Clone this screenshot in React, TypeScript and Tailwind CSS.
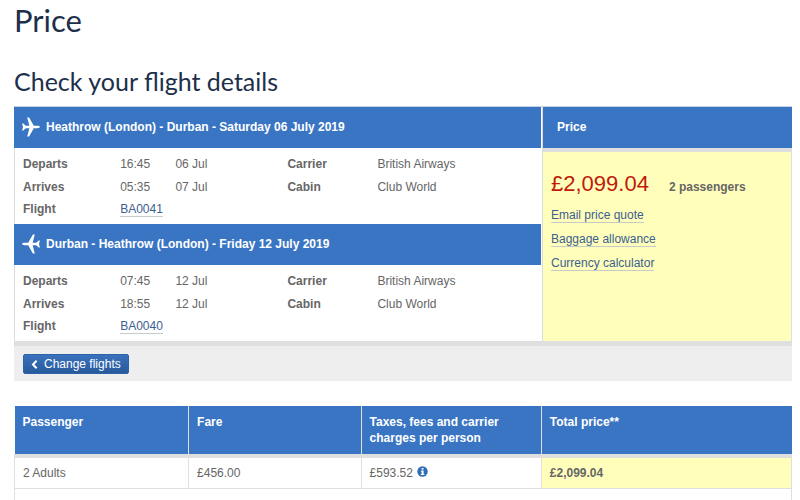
interface Flight {
  title: string;
  inbound: boolean;
  departs: string[];
  arrives: string[];
  number: string;
}

const flights: Flight[] = [
  {
    title: "Heathrow (London) - Durban - Saturday 06 July 2019",
    inbound: false,
    departs: ["16:45", "06 Jul"],
    arrives: ["05:35", "07 Jul"],
    number: "BA0041",
  },
  {
    title: "Durban - Heathrow (London) - Friday 12 July 2019",
    inbound: true,
    departs: ["07:45", "12 Jul"],
    arrives: ["18:55", "12 Jul"],
    number: "BA0040",
  },
];

const priceLinks = ["Email price quote", "Baggage allowance", "Currency calculator"];

const linkStyle = "inline-block border-b border-[#c3ccc8] leading-[14px] text-[#3c6090]";

function PlaneIcon({ inbound }: { inbound: boolean }) {
  return (
    <svg
      width="18"
      height="20"
      viewBox="0 0 18 20"
      fill="white"
      aria-hidden="true"
      className={inbound ? "shrink-0 -scale-x-100" : "shrink-0"}
    >
      <path d="M0.1 6.4h1.2L3.8 8.8h3.6L5.2 0.6h1.9L11.8 8.8h3.4c1.4 0 2.7.5 2.7 1.2s-1.3 1.2-2.7 1.2h-3.4L7.1 19.4H5.2l2.2-8.2H3.8l-2.5 2.4H0.1L1 10z" />
    </svg>
  );
}

function FlightSection({ flight }: { flight: Flight }) {
  return (
    <section>
      <h3 className="flex h-[41px] items-center gap-1.5 bg-[#3a75c4] pl-2 pb-[2px] font-bold text-white">
        <PlaneIcon inbound={flight.inbound} />
        {flight.title}
      </h3>
      <div className="border-l border-[#dcdcdc] pt-[5px] pb-[4px]">
        <table className="w-full table-fixed text-left">
          <colgroup>
            <col className="w-[20%]" />
            <col className="w-[10.5%]" />
            <col className="w-[21.3%]" />
            <col className="w-[17.1%]" />
            <col />
          </colgroup>
          <tbody>
            <tr className="h-[22px]">
              <th className="pl-2">Departs</th>
              <td>{flight.departs[0]}</td>
              <td>{flight.departs[1]}</td>
              <th>Carrier</th>
              <td>British Airways</td>
            </tr>
            <tr className="h-[23px]">
              <th className="pl-2">Arrives</th>
              <td>{flight.arrives[0]}</td>
              <td>{flight.arrives[1]}</td>
              <th>Cabin</th>
              <td>Club World</td>
            </tr>
            <tr className="h-[22px]">
              <th className="pl-2">Flight</th>
              <td colSpan={4}>
                <a href="#" className={linkStyle}>{flight.number}</a>
              </td>
            </tr>
          </tbody>
        </table>
      </div>
    </section>
  );
}

function PricePanel() {
  return (
    <aside className="flex flex-col border-l border-[#dcdcdc]">
      <h3 className="flex h-[41px] items-center bg-[#3a75c4] pl-3.5 pb-[2px] font-bold text-white">Price</h3>
      <div className="grow border-t-4 border-r border-[#dfdfdf] bg-[#ffffbb] pt-4 pl-2">
        <p className="flex items-baseline gap-5">
          <span className="text-[22px] leading-8 text-[#c01a0c]">£2,099.04</span>
          <b>2 passengers</b>
        </p>
        <ul className="mt-2 space-y-[9px]">
          {priceLinks.map((label) => (
            <li key={label} className="flex">
              <a href="#" className={linkStyle}>{label}</a>
            </li>
          ))}
        </ul>
      </div>
    </aside>
  );
}

function FareTable() {
  return (
    <table className="mt-[25px] w-full table-fixed text-left">
      <colgroup>
        <col className="w-[22.4%]" />
        <col className="w-[22.2%]" />
        <col className="w-[23.2%]" />
        <col />
      </colgroup>
      <thead>
        <tr className="h-[50px] border-b-4 border-[#dfdfdf] bg-[#3a75c4] align-top leading-4 text-white">
          <th className="pt-2 pl-2">Passenger</th>
          <th className="border-l border-[#dfdfdf] pt-2 pl-2">Fare</th>
          <th className="border-l border-[#dfdfdf] pt-2 pl-2">
            Taxes, fees and carrier<br />charges per person
          </th>
          <th className="border-l border-[#dfdfdf] pt-2 pl-2">Total price**</th>
        </tr>
      </thead>
      <tbody>
        <tr className="h-8 border border-[#dfdfdf]">
          <td className="pl-2">2 Adults</td>
          <td className="border-l border-[#dfdfdf] pl-2">£456.00</td>
          <td className="border-l border-[#dfdfdf] pl-2">
            <span className="flex items-center gap-1">
              £593.52
              <button type="button" aria-label="About taxes and fees" className="pb-[2px]">
                <svg width="11" height="11" viewBox="0 0 11 11" className="block" aria-hidden="true">
                  <circle cx="5.5" cy="5.5" r="5.2" fill="#2f6cb8" />
                  <path d="M4.6 1.9h2v1.5h-2zM3.9 4.4h2.7v3.5h.8v1H3.8v-1h.8V5.4h-.7z" fill="white" />
                </svg>
              </button>
            </span>
          </td>
          <td className="border-l border-[#dfdfdf] bg-[#ffffbb] pl-2 font-bold">£2,099.04</td>
        </tr>
        <tr className="h-[31px] border border-[#dfdfdf]">
          <td colSpan={4}></td>
        </tr>
      </tbody>
    </table>
  );
}

export default function App() {
  return (
    <main className="h-screen overflow-hidden bg-white pr-2 pl-3.5 font-['Liberation_Sans',Arial,sans-serif] text-[12px] leading-4 text-[#666]">
      <h1 className="font-[Lato,sans-serif] text-[31px] leading-10 text-[#1d2f4b]">Price</h1>
      <h2 className="mt-[25px] mb-[9px] font-[Lato,sans-serif] text-[25px] leading-8 text-[#1d2f4b]">
        Check your flight details
      </h2>
      <div className="grid grid-cols-[528fr_250fr] border-t border-[#c9d5e6]">
        <div className="pr-px">
          {flights.map((flight) => (
            <FlightSection key={flight.number} flight={flight} />
          ))}
        </div>
        <PricePanel />
      </div>
      <div className="border-t-[5px] border-[#dfdfdf] bg-[#eee] px-[9px] pt-2 pb-[7px]">
        <button
          type="button"
          className="flex h-5 items-center gap-1.5 rounded-xs border border-[#2c62a8] bg-linear-to-b from-[#3a72bd] to-[#28599c] px-[7px] text-white"
        >
          <svg width="7" height="9" viewBox="0 0 7 9" fill="none" stroke="white" strokeWidth="2" aria-hidden="true">
            <path d="M5.6 0.8L2 4.5l3.6 3.7" />
          </svg>
          Change flights
        </button>
      </div>
      <FareTable />
    </main>
  );
}
